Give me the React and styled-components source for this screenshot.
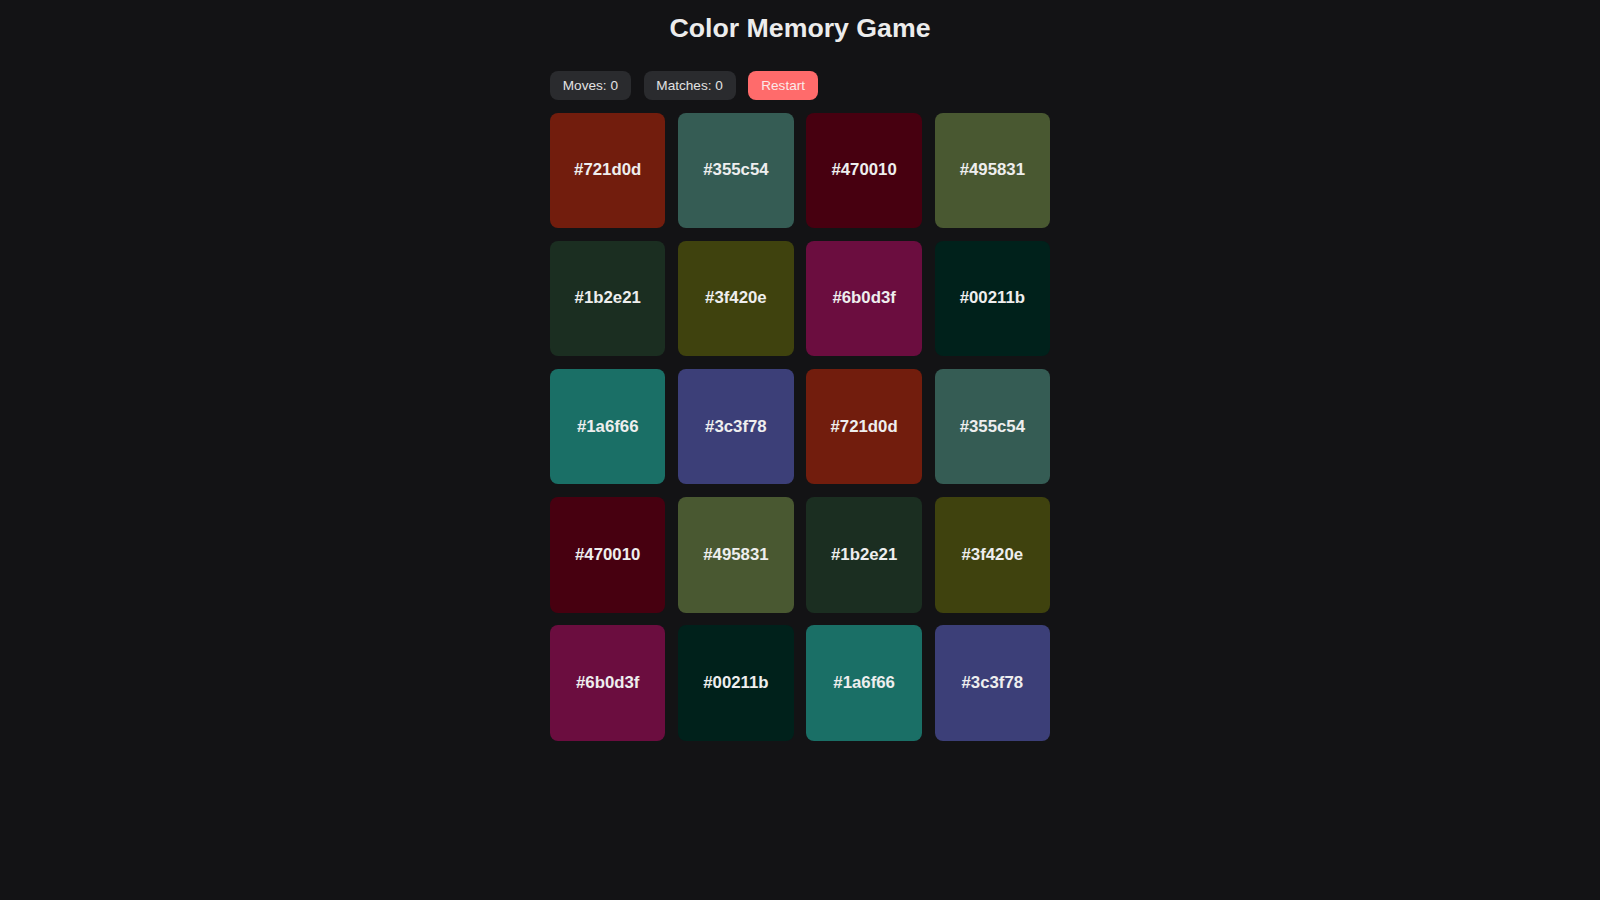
import React, { useState } from "react";
import styled, { createGlobalStyle } from "styled-components";

const GlobalStyle = createGlobalStyle`
  html, body {
    margin: 0;
    background: #131315;
    color: #e8e8e8;
    font-family: "Liberation Sans", Arial, sans-serif;
  }
`;

const Page = styled.div`
  min-height: 100vh;
  padding-top: 13px;
  display: flex;
  flex-direction: column;
  align-items: center;
  box-sizing: border-box;
`;

const Title = styled.h1`
  margin: 0 0 27.3px;
  font-size: 26.7px;
  font-weight: 700;
  color: #ececec;
`;

const Board = styled.div`
  width: 500px;
  display: flex;
  flex-direction: column;
  gap: 0.8rem;
`;

const Controls = styled.div`
  display: flex;
  gap: 0.8rem;
`;

const Pill = styled.div`
  padding: 0.4rem 0.8rem;
  border-radius: 8px;
  background: ${(p) => (p.$accent ? "#ff6b6b" : "#2a2b2e")};
  color: ${(p) => (p.$accent ? "#fbe9e9" : "#e2e2e2")};
  font-size: 0.85rem;
  line-height: 1.15;
`;

const RestartButton = styled(Pill).attrs({ as: "button" })`
  border: none;
  font-family: inherit;
  cursor: pointer;
`;

const Grid = styled.div`
  display: grid;
  grid-template-columns: repeat(4, 1fr);
  gap: 0.8rem;
`;

const Card = styled.div`
  aspect-ratio: 1 / 1;
  border-radius: 8px;
  background: ${(p) => p.$color};
  display: flex;
  align-items: center;
  justify-content: center;
  font-size: 1.05rem;
  font-weight: 700;
  color: #eeeeee;
  cursor: pointer;
`;

const cards = [
  "#721d0d", "#355c54", "#470010", "#495831",
  "#1b2e21", "#3f420e", "#6b0d3f", "#00211b",
  "#1a6f66", "#3c3f78", "#721d0d", "#355c54",
  "#470010", "#495831", "#1b2e21", "#3f420e",
  "#6b0d3f", "#00211b", "#1a6f66", "#3c3f78",
];

export default function App() {
  const [moves, setMoves] = useState(0);
  const [matches, setMatches] = useState(0);

  const restart = () => {
    setMoves(0);
    setMatches(0);
  };

  return (
    <Page>
      <GlobalStyle />
      <Title>Color Memory Game</Title>
      <Board>
        <Controls>
          <Pill>Moves: {moves}</Pill>
          <Pill>Matches: {matches}</Pill>
          <RestartButton $accent onClick={restart}>
            Restart
          </RestartButton>
        </Controls>
        <Grid>
          {cards.map((c, i) => (
            <Card key={i} $color={c}>
              {c}
            </Card>
          ))}
        </Grid>
      </Board>
    </Page>
  );
}
